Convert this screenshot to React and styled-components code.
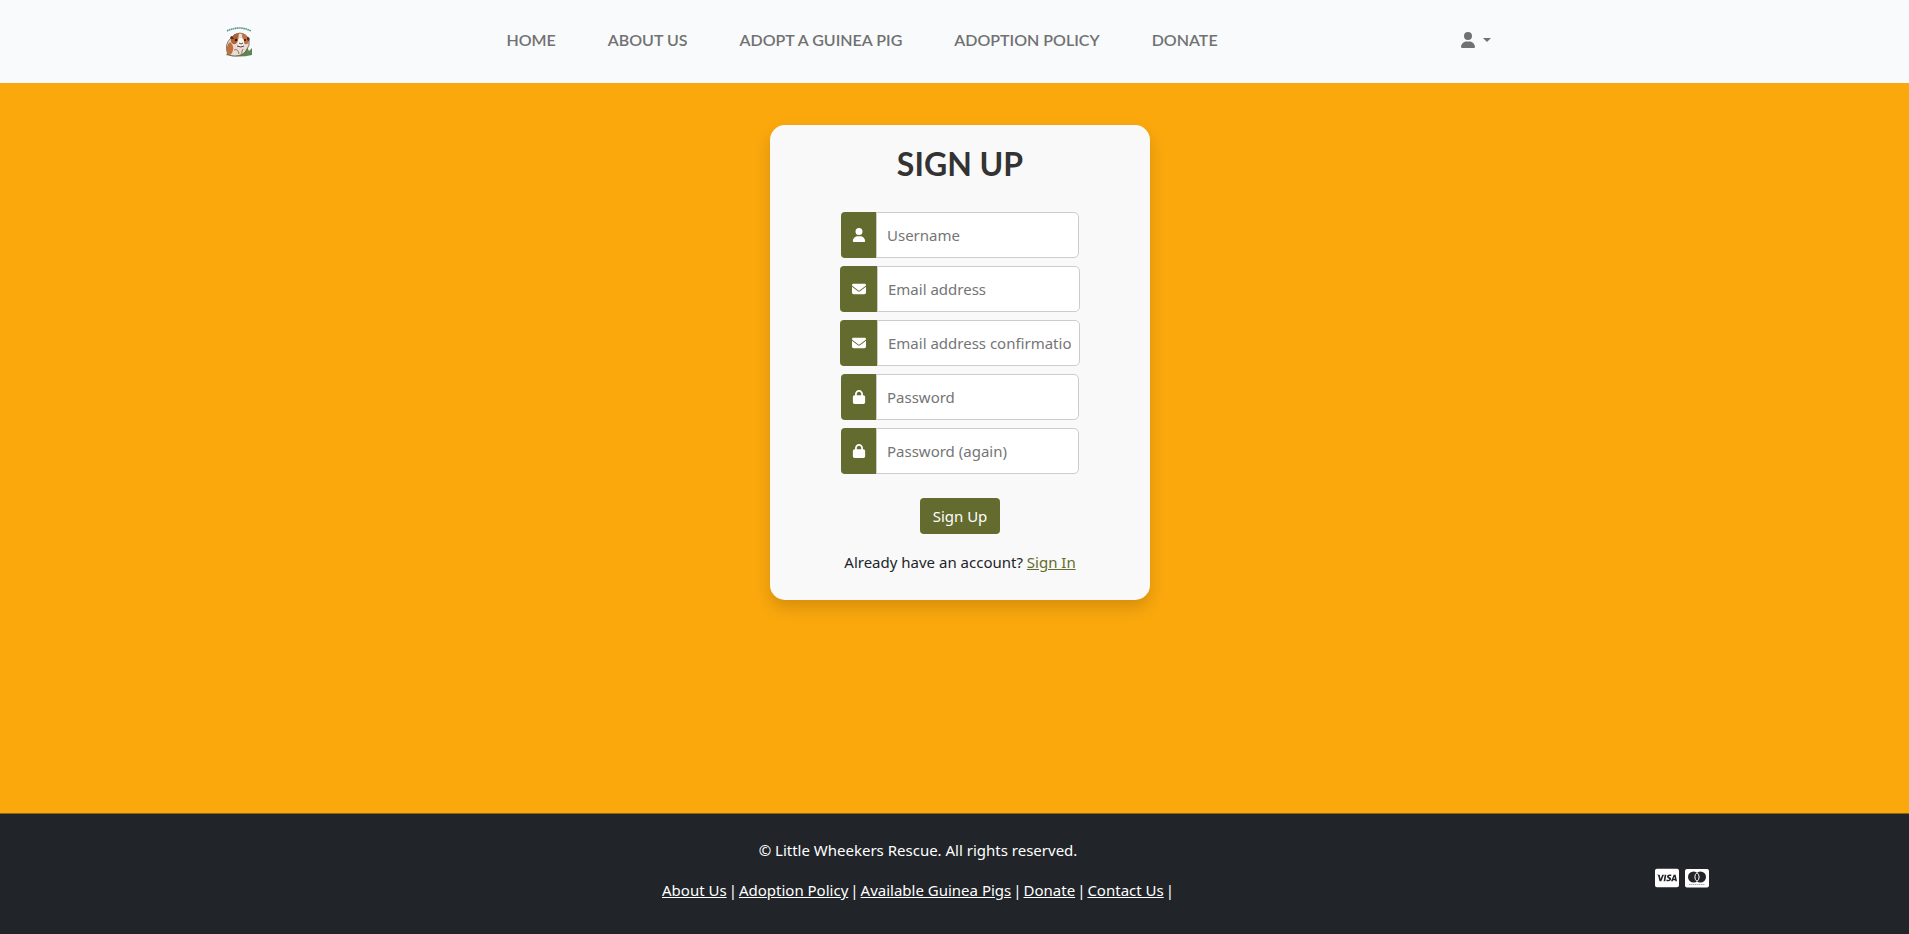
import React from "react";
import styled, { createGlobalStyle } from "styled-components";
import { FaUser, FaEnvelope, FaLock, FaCcVisa } from "react-icons/fa6";

const olive = "#636b2f";

const GlobalStyle = createGlobalStyle`
  *, *::before, *::after { box-sizing: border-box; }
  body {
    margin: 0;
    background: #fba80d;
    color: #212529;
    font-family: "Segoe UI", "Noto Sans", sans-serif;
    font-size: 15px;
    line-height: 24px;
  }
`;

const Page = styled.div`
  min-height: 100vh;
  display: flex;
  flex-direction: column;
`;

const Header = styled.header`
  display: flex;
  align-items: center;
  justify-content: space-between;
  height: 83px;
  padding: 0 418px 0 216px;
  padding-right: calc(22% - 2px);
  background: #f8fafc;
`;

const LogoLink = styled.a`
  display: flex;
  justify-content: center;
  width: 46px;
`;

const Nav = styled.nav`
  display: flex;
  gap: 52px;
  padding: 0 0 4px 2px;
`;

const NavLink = styled.a`
  color: #717171;
  font-family: Lato, sans-serif;
  font-size: 16px;
  font-weight: 600;
  text-decoration: none;
  text-transform: uppercase;
`;

const AccountButton = styled.button`
  display: flex;
  align-items: center;
  gap: 7px;
  padding: 0 0 4px;
  border: 0;
  background: none;
  color: #717171;
  font-size: 16px;
`;

const Caret = styled.span`
  border: 4px solid transparent;
  border-top-color: currentColor;
  border-bottom: 0;
`;

const Main = styled.main`
  flex: 1;
  padding: 42px 0 42px 11px;
`;

const Card = styled.section`
  width: 380px;
  max-width: 100%;
  margin: 0 auto;
  padding: 20px 20px 26px;
  border-radius: 15px;
  background: #f9f9f9;
  box-shadow: 0 8px 16px rgba(0, 0, 0, 0.15);
  text-align: center;
`;

const Title = styled.h1`
  margin: 0 0 29px;
  color: #333;
  font-family: Lato, sans-serif;
  font-size: 32px;
  font-weight: 700;
  line-height: 38px;
`;

const Form = styled.form`
  display: flex;
  flex-direction: column;
  align-items: center;
  gap: 8px;
`;

const Field = styled.div`
  display: flex;
  height: 46px;
`;

const FieldIcon = styled.label`
  display: flex;
  align-items: center;
  justify-content: center;
  width: ${({ $wide }) => ($wide ? 37 : 35)}px;
  border-radius: 4px 0 0 4px;
  background: ${olive};
  color: #fff;
  font-size: 14px;
`;

const Input = styled.input`
  width: 203px;
  padding: 0 8px 0 10px;
  border: 1px solid #ccc;
  border-radius: 0 5px 5px 0;
  background: #fff;
  color: #212529;
  font: inherit;
  &::placeholder { color: #757575; opacity: 1; }
`;

const SubmitButton = styled.button`
  width: 80px;
  height: 36px;
  margin: 16px 0 8px;
  padding: 0;
  border: 0;
  border-radius: 4px;
  background: ${olive};
  color: #fff;
  font: inherit;
`;

const Prompt = styled.p`
  margin: 8px 0 0;
`;

const TextLink = styled.a`
  color: ${olive};
`;

const Footer = styled.footer`
  display: flex;
  align-items: center;
  gap: 55px;
  height: 121px;
  padding: 0 200px 0 236px;
  border-top: 1px solid #8c6518;
  background: #212529;
  color: #fff;
`;

const FooterText = styled.div`
  flex: 1;
  text-align: center;
`;

const Copyright = styled.p`
  margin: 0 0 16px;
`;

const FooterLinks = styled.div`
  display: flex;
  justify-content: center;
  gap: 2px;
  margin-bottom: 8px;
`;

const FooterLink = styled.a`
  color: #fff;
`;

const PaymentCards = styled.div`
  display: flex;
  align-items: center;
  gap: 6px;
  padding-top: 8px;
  font-size: 24px;
`;

const fields = [
  { id: "username", type: "text", label: "Username", Icon: FaUser },
  { id: "email", type: "email", label: "Email address", Icon: FaEnvelope, wide: true },
  { id: "email2", type: "email", label: "Email address confirmation", Icon: FaEnvelope, wide: true },
  { id: "password1", type: "password", label: "Password", Icon: FaLock },
  { id: "password2", type: "password", label: "Password (again)", Icon: FaLock },
];

function GuineaPig() {
  return (
    <svg width="30" height="34" viewBox="0 0 30 34" aria-hidden="true">
      <path d="M3 6 Q15 0 27 6" fill="none" stroke="#4f9a86" strokeWidth="1.6" strokeDasharray="1.6 .5" />
      <path d="M2 30 L4 27 L20 27 L23 22 L25 26 L28 23 L28 30 Q15 33 2 30Z" fill="#5f8650" />
      <path d="M3 27 Q1 19 6 14 Q10 8 16 8 Q23 9 25 15 Q26 21 23 24 Q20 31 11 31 Q4 31 3 27Z" fill="#e9ddd3" stroke="#5b4436" strokeWidth=".7" />
      <path d="M3 27 Q2 20 6 17 Q10 20 9 25 Q8 30 5 30Z" fill="#c0703d" />
      <path d="M7 14 Q9 9 15 8 L14 15 Q13 20 9 19 Q6 17 7 14Z" fill="#b5602f" />
      <path d="M18 8 Q24 10 25 16 Q24 20 21 19 Q18 17 18 8Z" fill="#c4713e" />
      <path d="M7 14 Q5 12 8 11 L10 14Z M23 12 Q27 12 25 16 L23 15Z" fill="#4b3127" />
      <circle cx="12" cy="15" r="1.2" fill="#1e1918" />
      <circle cx="21" cy="15" r="1.1" fill="#1e1918" />
      <ellipse cx="17" cy="17" rx="3" ry="4" fill="#fbf5ef" />
      <path d="M15 18 L17 19 L19 18 M13 21 Q17 23 20 21" fill="none" stroke="#4a302a" strokeWidth=".9" />
      <path d="M10 25 Q14 23 15 29 M19 24 Q17 27 18 30" fill="none" stroke="#8b5a3c" strokeWidth=".8" />
    </svg>
  );
}

function CirclesCard() {
  return (
    <svg width="24" height="24" viewBox="0 0 24 24" role="img" aria-label="Mastercard">
      <rect x="0" y="3" width="24" height="18.5" rx="2" fill="#fff" />
      <circle cx="8.6" cy="11" r="5.6" fill="#212529" />
      <circle cx="15.4" cy="11" r="5.6" fill="#212529" />
      <path d="M12 6.6 A5.6 5.6 0 0 1 12 15.4 A5.6 5.6 0 0 1 12 6.6Z" fill="#212529" stroke="#fff" strokeWidth="1" />
      <path d="M4 18.5 H20" stroke="#aaa" strokeWidth="1" strokeDasharray="1.5 .5" />
    </svg>
  );
}

export default function App() {
  return (
    <Page>
      <GlobalStyle />
      <Header>
        <LogoLink href="#" aria-label="Little Wheekers Rescue"><GuineaPig /></LogoLink>
        <Nav>
          {["Home", "About us", "Adopt a guinea pig", "Adoption policy", "Donate"].map((t) => (
            <NavLink key={t} href="#">{t}</NavLink>
          ))}
        </Nav>
        <AccountButton aria-label="Account"><FaUser /><Caret /></AccountButton>
      </Header>
      <Main>
        <Card>
          <Title>SIGN UP</Title>
          <Form>
            {fields.map(({ id, type, label, Icon, wide }) => (
              <Field key={id}>
                <FieldIcon htmlFor={id} aria-label={label} $wide={wide}><Icon /></FieldIcon>
                <Input id={id} type={type} placeholder={label} />
              </Field>
            ))}
            <SubmitButton type="submit">Sign Up</SubmitButton>
          </Form>
          <Prompt>Already have an account? <TextLink href="#">Sign In</TextLink></Prompt>
        </Card>
      </Main>
      <Footer>
        <FooterText>
          <Copyright>© Little Wheekers Rescue. All rights reserved.</Copyright>
          <FooterLinks>
            {["About Us", "Adoption Policy", "Available Guinea Pigs", "Donate", "Contact Us"].map((t) => (
              <React.Fragment key={t}>
                <FooterLink href="#">{t}</FooterLink>
                <span>|</span>
              </React.Fragment>
            ))}
          </FooterLinks>
        </FooterText>
        <PaymentCards>
          <FaCcVisa role="img" aria-label="Visa" />
          <CirclesCard />
        </PaymentCards>
      </Footer>
    </Page>
  );
}
